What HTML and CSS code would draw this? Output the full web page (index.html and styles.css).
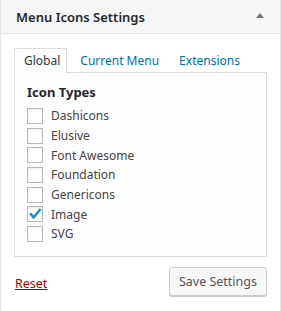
FILE: index.html
```html
<!DOCTYPE html>
<html lang="en">
  <head>
    <meta charset="UTF-8" />
    <title>Menu Icons Settings</title>
    <link rel="stylesheet" href="styles.css">
  </head>
  <body>
    <div class="postbox">
      <h2 class="hndle">
        <span>Menu Icons Settings</span>
        <span class="toggle"></span>
      </h2>
      <div class="inside">
        <ul class="tabs">
          <li class="tab aktiv">Global</li>
          <li class="tab"><a href="#">Current Menu</a></li>
          <li class="tab"><a href="#">Extensions</a></li>
        </ul>
        <section class="panel">
          <h4>Icon Types</h4>
          <ul class="types">
            <li><span class="box"></span>Dashicons</li>
            <li><span class="box"></span>Elusive</li>
            <li><span class="box"></span>Font Awesome</li>
            <li><span class="box"></span>Foundation</li>
            <li><span class="box"></span>Genericons</li>
            <li>
              <span class="box">
                <svg viewBox="0 0 16 16" width="16" height="16">
                  <path d="M2.2 8.2 L4 6.6 L6.6 9.4 L12.6 2.2 L14.4 3.8 L6.7 13.2 Z" fill="#1e8cbe" />
                </svg>
              </span>Image
            </li>
            <li><span class="box"></span>SVG</li>
          </ul>
        </section>
        <div class="footer">
          <a href="#" class="reset">Reset</a>
          <button class="save">Save Settings</button>
        </div>
      </div>
    </div>
  </body>
</html>
```

FILE: styles.css
```css
body {
  margin: 0;
  background-color: #ffffff;
  font-family: "Noto Sans", "Open Sans", sans-serif;
  font-size: 12px;
  color: #444444;
}

.postbox {
  border-left: 1px solid #e5e5e5;
  border-right: 1px solid #e5e5e5;
  min-height: 311px;
  box-sizing: border-box;
}

.hndle {
  margin: 0;
  height: 34px;
  box-sizing: border-box;
  padding: 0 16px 0 15px;
  display: flex;
  align-items: center;
  justify-content: space-between;
  background-color: #f6f6f6;
  border-bottom: 1px solid #e5e5e5;
  font-size: 13px;
  font-weight: 600;
  color: #23282d;
}

.toggle {
  width: 0;
  height: 0;
  border-left: 4px solid transparent;
  border-right: 4px solid transparent;
  border-bottom: 5px solid #72777c;
  margin-top: -2px;
}

.inside {
  padding: 14px 13px 0 13px;
}

.tabs {
  list-style: none;
  margin: 0;
  padding: 0;
  display: flex;
  height: 24px;
}

.tab {
  height: 24px;
  line-height: 24px;
  padding: 0 6px 0 9px;
  border: 1px solid transparent;
  border-bottom: none;
  margin-right: 3px;
  white-space: nowrap;
  font-size: 12px;
}

.tab a {
  color: #0073aa;
  text-decoration: none;
}

.aktiv {
  border-color: #dddddd;
  background-color: #fdfdfd;
  color: #32373c;
  position: relative;
  z-index: 1;
}

.panel {
  border: 1px solid #dddddd;
  background-color: #fdfdfd;
  padding: 9px 12px 12px 12px;
}

.panel h4 {
  margin: 0 0 4px 0;
  font-size: 13px;
  font-weight: 700;
  color: #23282d;
  line-height: 20px;
}

.types {
  list-style: none;
  margin: 0;
  padding: 0;
}

.types li {
  display: flex;
  align-items: center;
  height: 19.7px;
  color: #444444;
  white-space: nowrap;
}

.box {
  width: 14px;
  height: 14px;
  border: 1px solid #b4b9be;
  background-color: #ffffff;
  box-shadow: inset 0 1px 2px rgba(0, 0, 0, 0.07);
  margin-right: 8px;
  position: relative;
  flex-shrink: 0;
}

.box svg {
  position: absolute;
  left: -1px;
  top: -1px;
}

.footer {
  display: flex;
  justify-content: space-between;
  align-items: center;
  margin-top: 10px;
}

.reset {
  color: #aa0000;
  text-decoration: underline;
  margin-left: 1px;
  margin-top: 4px;
  font-size: 12.5px;
}

.save {
  font-family: "Noto Sans", "Open Sans", sans-serif;
  font-size: 12.5px;
  color: #555555;
  background-color: #f7f7f7;
  border: 1px solid #cccccc;
  border-radius: 3px;
  box-shadow: 0 1px 0 #cccccc;
  height: 29px;
  padding: 0 9px;
  white-space: nowrap;
}
```
